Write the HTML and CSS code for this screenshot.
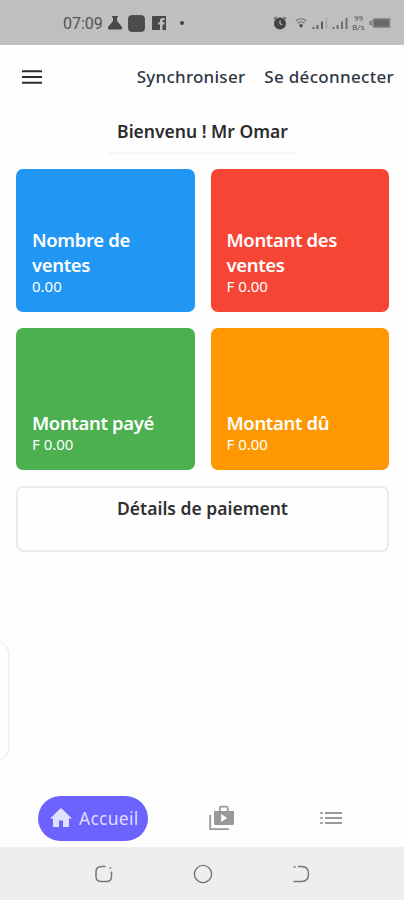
FILE: index.html
```html
<!DOCTYPE html>
<html lang="fr">
  <head>
    <meta charset="UTF-8" />
    <meta name="viewport" content="width=device-width, initial-scale=1.0" />
    <title>Accueil</title>
    <link rel="stylesheet" href="styles.css">
  </head>
  <body>
    <div class="status-bar">
      <span class="time">07:09</span>
      <svg class="flask" width="14" height="16" viewBox="0 0 14 16">
        <path d="M4 1h6v1.500H9V6l5 6v1.500q0 1-1 1H1q-1 0-1-1V12l5-6V2.500H4z" fill="#494949" />
      </svg>
      <svg class="app" width="17" height="17" viewBox="0 0 17 17">
        <rect x="0.700" y="0.700" width="15.600" height="15.600" rx="2.500" fill="#4c4c4c" stroke="#404040" />
      </svg>
      <svg class="facebook" width="14" height="14" viewBox="0 0 14 14">
        <path d="M0 0h14v14h-3.500V8.500h2V6.300h-2V5q0-1 1-1h1.200V2h-2Q8 2 8 4.600v1.700H6.300v2.200H8V14H0z" fill="#494949" />
      </svg>
      <span class="dot"></span>
      <div class="status-icons">
        <svg width="14" height="14" viewBox="0 0 14 14">
          <circle cx="7" cy="7.500" r="6" fill="#444" />
          <path d="M7 4.500v3l2 1.500" fill="none" stroke="#bbb" stroke-width="1.200" />
          <path d="M1 3l2.500-2M13 3l-2.500-2" fill="none" stroke="#555" stroke-width="1.200" />
        </svg>
        <svg class="wifi" width="12" height="12" viewBox="0 0 12 12">
          <path d="M.8 4q5.200-4.500 10.400 0M2.600 6.300q3.400-2.900 6.800 0" fill="none" stroke="#707070" stroke-width="1.200" />
          <path d="M3.800 8q2.200-1.700 4.400 0L6 11z" fill="#444" />
        </svg>
        <svg class="signal" width="16" height="13" viewBox="0 0 16 13">
          <path d="M1.500 10v2M5.500 8v4M10 4.500V12" stroke="#606060" stroke-width="2" />
          <path d="M14.500 1v11" stroke="#a8a8a8" stroke-width="2" />
        </svg>
        <svg class="signal" width="16" height="13" viewBox="0 0 16 13">
          <path d="M1.500 10v2M5.500 8v4M10 4.500V12M14.500 1v11" stroke="#686868" stroke-width="1.800" />
        </svg>
        <span class="speed">99<br>B/s</span>
        <svg class="battery" width="22" height="12" viewBox="0 0 22 12">
          <path d="M0 4h2l3-3h16.500v10H5L2 8H0z" fill="#8d8d8d" />
          <rect x="5" y="2.500" width="15" height="7" fill="#686868" />
        </svg>
      </div>
    </div>

    <header class="top-bar">
      <svg class="menu" width="20" height="14" viewBox="0 0 20 14">
        <path d="M0 1.200h20M0 7h20M0 12.800h20" stroke="#25303b" stroke-width="2" />
      </svg>
      <a class="sync">Synchroniser</a>
      <a class="logout">Se déconnecter</a>
    </header>

    <main>
      <h1 class="welcome">Bienvenu ! Mr Omar</h1>
      <div class="cards">
        <div class="card blue">
          <h2>Nombre de ventes</h2>
          <p>0.00</p>
        </div>
        <div class="card red">
          <h2>Montant des ventes</h2>
          <p>F 0.00</p>
        </div>
        <div class="card green">
          <h2>Montant payé</h2>
          <p>F 0.00</p>
        </div>
        <div class="card orange">
          <h2>Montant dû</h2>
          <p>F 0.00</p>
        </div>
      </div>
      <div class="details">Détails de paiement</div>
      <div class="side-handle"></div>
    </main>

    <nav class="tabs">
      <a class="tab-active">
        <svg width="22" height="20" viewBox="0 0 22 20">
          <path d="M11 0l11 10.500h-3V19h-6v-6.500H9V19H3v-8.500H0z" fill="#e2e0ff" />
        </svg>
        <span>Accueil</span>
      </a>
      <svg class="tab-sales" width="26" height="26" viewBox="0 0 26 26">
        <path d="M1.200 10v14.200H20" fill="none" stroke="#999" stroke-width="1.800" />
        <path d="M10.800 6V3.200q0-1.500 1.500-1.500h5q1.500 0 1.500 1.500V6" fill="none" stroke="#999" stroke-width="1.800" />
        <path d="M5 6h20v12.500q0 1.500-1.500 1.500h-17Q5 20 5 18.500z" fill="#999" />
        <path d="M12.200 9v8l6-4z" fill="#fff" />
      </svg>
      <svg class="tab-list" width="22" height="14" viewBox="0 0 22 14">
        <path d="M0 2h3M0 7h3M0 12h3" stroke="#aaa" stroke-width="2" />
        <path d="M5 2h17M5 7h17M5 12h17" stroke="#999" stroke-width="1.800" />
      </svg>
    </nav>

    <div class="system-nav">
      <svg width="18" height="18" viewBox="0 0 18 18">
        <path d="M10.500 1.500H6.500Q1 1.500 1 7v4.500Q1 16.500 6 16.500h5.500q5 0 5-5V6.500M14.500 3h1.800" fill="none" stroke="#777" stroke-width="1.500" />
      </svg>
      <svg width="20" height="20" viewBox="0 0 20 20">
        <circle cx="10" cy="10" r="8.600" fill="none" stroke="#777" stroke-width="1.400" />
      </svg>
      <svg width="18" height="18" viewBox="0 0 18 18">
        <path d="M1.500 2h2M6 1.500h3.500q7 0 7 7.500t-7 7.500H1.500" fill="none" stroke="#777" stroke-width="1.500" />
      </svg>
    </div>
  </body>
</html>
```

FILE: styles.css
```css
* {
  box-sizing: border-box;
}
body {
  display: flex;
  flex-direction: column;
  height: 900px;
  margin: 0;
  font-family: "Noto Sans", sans-serif;
  background-color: #fefefe;
  overflow: hidden;
}
svg {
  display: block;
  flex: none;
}
h1,
h2,
p {
  margin: 0;
}
.status-bar {
  display: flex;
  align-items: center;
  height: 45px;
  padding: 1px 13px 0 63px;
  background-color: #bfbfbf;
  color: #555;
}
.time {
  width: 45px;
  font-family: Roboto, sans-serif;
  font-size: 16px;
}
.app {
  margin-left: 6px;
}
.facebook {
  margin-left: 7px;
}
.dot {
  width: 4px;
  height: 4px;
  margin-left: 14px;
  border-radius: 50%;
  background-color: #444;
}
.status-icons {
  display: flex;
  align-items: center;
  margin-left: auto;
}
.wifi {
  margin-left: 8px;
}
.signal {
  margin-left: 4px;
}
.wifi + .signal {
  margin-left: 5px;
}
.speed {
  width: 15px;
  margin: 0 3px;
  font-family: Roboto, sans-serif;
  font-size: 8px;
  line-height: 9px;
  text-align: center;
}
.top-bar {
  display: flex;
  align-items: center;
  height: 64px;
  padding: 0 10px 2px 22px;
  font-size: 17px;
  font-weight: 500;
  color: #303744;
  white-space: nowrap;
}
.menu {
  margin-top: 2px;
}
.sync {
  margin-left: auto;
  letter-spacing: 0.25px;
}
.logout {
  margin-left: 19px;
  letter-spacing: 0.3px;
}
main {
  position: relative;
  flex: 1;
  padding: 0 15px 0 16px;
}
.welcome {
  width: 190px;
  height: 45px;
  margin: 0 auto;
  border-bottom: 2px solid #f6f6f6;
  font-size: 17.5px;
  font-weight: 600;
  line-height: 44px;
  text-align: center;
  color: #2c2c2c;
  white-space: nowrap;
}
.cards {
  display: grid;
  grid-template-columns: 1fr 1fr;
  grid-auto-rows: 142.5px;
  gap: 16px;
  margin-top: 15px;
}
.card {
  display: flex;
  flex-direction: column;
  justify-content: flex-end;
  padding: 0 16px 16px;
  border-radius: 7px;
  color: #fff;
}
.card h2 {
  font-size: 18.5px;
  font-weight: 600;
  line-height: 25px;
  letter-spacing: -0.36px;
}
.card p {
  font-size: 15px;
  line-height: 19px;
}
.blue {
  background-color: #2196f3;
}
.red {
  background-color: #f64435;
}
.green {
  background-color: #4caf50;
}
.orange {
  background-color: #ff9800;
}
.details {
  height: 66px;
  margin-top: 16px;
  padding-top: 9px;
  border: 2px solid #ebebeb;
  border-radius: 7px;
  font-size: 17.5px;
  font-weight: 600;
  line-height: 22px;
  text-align: center;
  color: #303030;
}
/* edge panel handle, half off screen */
.side-handle {
  position: absolute;
  top: 530px;
  left: -24px;
  width: 34px;
  height: 124px;
  border: 2px solid #f2f2f2;
  border-radius: 17px;
}
.tabs {
  display: flex;
  align-items: center;
  height: 57px;
  padding: 0 62px 1px 38px;
}
.tab-active {
  display: flex;
  align-items: center;
  width: 110px;
  height: 45px;
  padding-left: 12px;
  border-radius: 23px;
  background-color: #6c63ff;
  font-size: 17.5px;
  letter-spacing: 0.25px;
  color: #dedcff;
}
.tab-active span {
  margin-left: 7px;
}
.tab-sales {
  margin-left: 61px;
}
.tab-list {
  margin-left: auto;
}
.system-nav {
  display: flex;
  align-items: center;
  justify-content: space-between;
  height: 53px;
  padding: 0 94px 0 95px;
  background-color: #eee;
}
```
